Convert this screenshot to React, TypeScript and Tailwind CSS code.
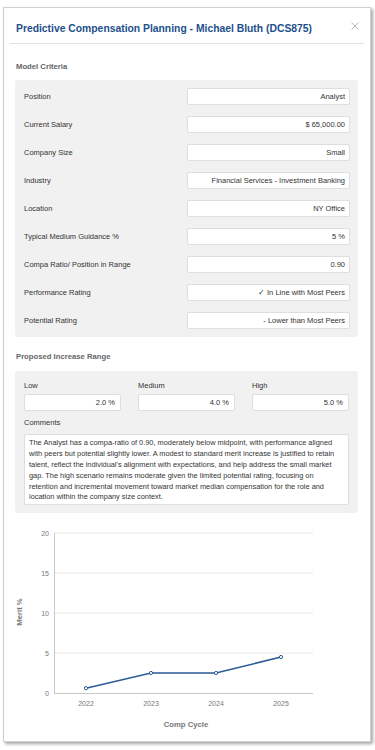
import React from "react";

const criteria: [string, string][] = [
  ["Position", "Analyst"],
  ["Current Salary", "$ 65,000.00"],
  ["Company Size", "Small"],
  ["Industry", "Financial Services - Investment Banking"],
  ["Location", "NY Office"],
  ["Typical Medium Guidance %", "5 %"],
  ["Compa Ratio/ Position in Range", "0.90"],
  ["Performance Rating", "\u2713 In Line with Most Peers"],
  ["Potential Rating", "- Lower than Most Peers"],
];

const range: [string, string][] = [
  ["Low", "2.0 %"],
  ["Medium", "4.0 %"],
  ["High", "5.0 %"],
];

const comment =
  "The Analyst has a compa-ratio of 0.90, moderately below midpoint, with performance aligned with peers but potential slightly lower. A modest to standard merit increase is justified to retain talent, reflect the individual's alignment with expectations, and help address the small market gap. The high scenario remains moderate given the limited potential rating, focusing on retention and incremental movement toward market median compensation for the role and location within the company size context.";

const points = [
  { year: "2022", x: 82, v: 0.6 },
  { year: "2023", x: 147, v: 2.5 },
  { year: "2024", x: 212, v: 2.5 },
  { year: "2025", x: 277, v: 4.5 },
];

function MeritChart() {
  const y = (v: number) => 180 - v * 8;
  return (
    <svg width="368" height="229" className="block" style={{ fontFamily: "'Liberation Sans', Arial, sans-serif" }}>
      {[20, 15, 10, 5].map((t) => (
        <line key={t} x1="50" x2="309" y1={y(t)} y2={y(t)} stroke="#e8e8e8" strokeWidth="1" />
      ))}
      <line x1="50.5" x2="50.5" y1="20" y2="180" stroke="#c8c8c8" strokeWidth="1" />
      <line x1="50" x2="309" y1="180.5" y2="180.5" stroke="#c8c8c8" strokeWidth="1" />
      {[0, 5, 10, 15, 20].map((t) => (
        <text key={t} x="45" y={y(t) + 2.5} textAnchor="end" fontSize="7" fill="#777">
          {t}
        </text>
      ))}
      {points.map((p) => (
        <text key={p.year} x={p.x} y="192.5" textAnchor="middle" fontSize="7" fill="#777">
          {p.year}
        </text>
      ))}
      <polyline
        points={points.map((p) => `${p.x},${y(p.v)}`).join(" ")}
        fill="none"
        stroke="#2b5a94"
        strokeWidth="1.5"
      />
      {points.map((p) => (
        <circle key={p.year} cx={p.x} cy={y(p.v)} r="1.6" fill="#ffffff" stroke="#2b5a94" strokeWidth="1" />
      ))}
      <text x="182" y="214" textAnchor="middle" fontSize="7.7" fontWeight="bold" fill="#777">
        Comp Cycle
      </text>
      <text
        x="0"
        y="0"
        transform="translate(18 99) rotate(-90)"
        textAnchor="middle"
        fontSize="7.7"
        fontWeight="bold"
        fill="#777"
      >
        Merit %
      </text>
    </svg>
  );
}

export default function App() {
  return (
    <div className="w-[375px] h-[750px] bg-white pl-[3px] pt-[7px] font-['Liberation_Sans',Arial,sans-serif]">
      <div className="w-[368px] h-[735px] bg-white border border-[#cfcfcf] shadow-[2px_2px_3px_rgba(0,0,0,0.35)] flex flex-col">
        {/* header */}
        <div className="mx-[6px] h-[36px] border-b border-[#e2e2e2] flex items-center justify-between pl-[6px] pr-[5px]">
          <h3 className="text-[10.35px] font-bold text-[#1d4f8c] mt-[6px]">
            Predictive Compensation Planning - Michael Bluth (DCS875)
          </h3>
          <svg width="8" height="8" viewBox="0 0 8 8" className="mt-[2px]">
            <path d="M0.5 0.5 L7.5 7.5 M7.5 0.5 L0.5 7.5" stroke="#b0b0b0" strokeWidth="0.9" />
          </svg>
        </div>

        {/* body */}
        <div className="pl-[11px] pr-[12px]">
          <div className="h-[36px] flex items-center pl-[1px] pt-[10px] text-[7.7px] font-bold text-[#666]">
            Model Criteria
          </div>
          <div className="bg-[#f1f1f1] rounded-[3px] pl-[9px] pr-[8px] py-[8px] flex flex-col gap-[11px]">
            {criteria.map(([label, value]) => (
              <div key={label} className="flex items-center justify-between h-[17px]">
                <span className="text-[7.5px] text-[#333]">{label}</span>
                <div className="w-[163px] h-[17px] bg-white border border-[#dedede] rounded-[2px] flex items-center justify-end pr-[4px] text-[7.5px] text-[#333]">
                  {value}
                </div>
              </div>
            ))}
          </div>

          <div className="h-[34px] flex items-center pl-[1px] pt-[6px] text-[7.7px] font-bold text-[#666]">
            Proposed Increase Range
          </div>
          <div className="bg-[#f1f1f1] rounded-[3px] px-[9px] pt-[6px] pb-[8px]">
            <div className="grid grid-cols-3 gap-[17px]">
              {range.map(([label, value]) => (
                <div key={label} className="flex flex-col">
                  <span className="h-[17px] flex items-center text-[7.5px] text-[#333]">{label}</span>
                  <div className="h-[17px] bg-white border border-[#dedede] rounded-[2px] flex items-center justify-end pr-[5px] text-[7.5px] text-[#333]">
                    {value}
                  </div>
                </div>
              ))}
            </div>
            <div className="h-[23px] flex items-center pt-[1px] text-[7.5px] text-[#333]">Comments</div>
            <div className="h-[71px] bg-white border border-[#dedede] rounded-[2px] px-[4px] pt-[3px] text-[7.4px] leading-[10.9px] text-[#333]">
              {comment}
            </div>
          </div>
        </div>

        <MeritChart />
      </div>
    </div>
  );
}
